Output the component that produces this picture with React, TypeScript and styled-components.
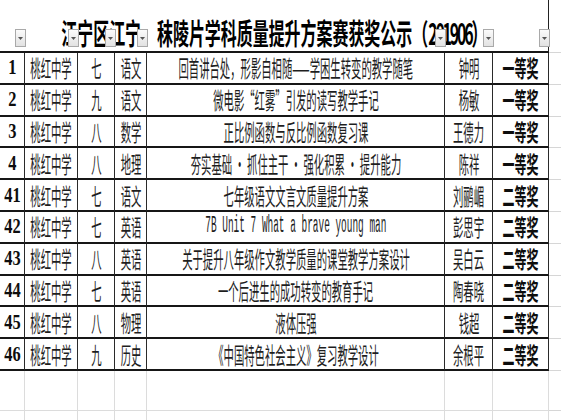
import React from "react";
import styled, { createGlobalStyle } from "styled-components";

const GlobalStyle = createGlobalStyle`
  html, body { margin: 0; padding: 0; background: #ffffff; overflow: hidden; }
  body { font-family: "Noto Sans CJK SC", "Noto Sans", sans-serif; }
`;

const COLS = "25px 53px 37px 32px 298px 48px 56px";

const Sheet = styled.div`
  display: grid;
  grid-template-columns: ${COLS} 12px;
  width: 561px;
  height: 420px;
  overflow: hidden;
  background: #ffffff;
`;

const TitleCell = styled.div`
  grid-column: 1 / span 7;
  position: relative;
  box-sizing: border-box;
  height: 53px;
  padding-top: 14px;
  border-bottom: 2px solid #161616;
  border-right: 1px solid #222;
  display: flex;
  align-items: center;
  justify-content: center;
`;

const Title = styled.span`
  display: inline-block;
  white-space: nowrap;
  font-family: "Noto Sans CJK SC", sans-serif;
  font-weight: 700;
  font-size: 29px;
  line-height: 1;
  color: #000;
  transform: scaleX(0.55);
  transform-origin: center;
`;

const Year = styled.span`
  letter-spacing: -4px;
`;

const FilterBar = styled.div`
  position: absolute;
  inset: 0;
  display: grid;
  grid-template-columns: ${COLS};
  pointer-events: none;
`;

const FilterSlot = styled.div`
  display: flex;
  justify-content: flex-end;
  align-items: flex-start;
  padding-top: 29px;
`;

const FilterButton = styled.div`
  box-sizing: border-box;
  width: 11px;
  height: 18px;
  margin-right: -1px;
  border: 1px solid #a9a9a9;
  background: linear-gradient(#fbfbfb, #e2e2e2);
  display: flex;
  align-items: center;
  justify-content: center;
`;

const Filler = styled.div<{ $h: string }>`
  box-sizing: border-box;
  height: ${(p) => p.$h};
  border-bottom: 1px solid #d6d6d6;
`;

const Cell = styled.div`
  box-sizing: border-box;
  height: 31.8px;
  border-bottom: 2px solid #161616;
  border-right: 1px solid #2a2a2a;
  display: flex;
  align-items: center;
  justify-content: center;
`;

const Blank = styled.div<{ $h: string }>`
  box-sizing: border-box;
  height: ${(p) => p.$h};
  border-right: 1px solid #dcdcdc;
  border-bottom: 1px solid #dcdcdc;
`;

type Kind = "num" | "body" | "award" | "latin";

const SIZE: Record<Kind, string> = { num: "21px", body: "23px", award: "23px", latin: "23px" };
const SCALE: Record<Kind, number> = { num: 0.78, body: 0.45, award: 0.52, latin: 0.41 };

const Squeeze = styled.span<{ $kind: Kind }>`
  display: inline-block;
  white-space: nowrap;
  line-height: 1;
  transform-origin: center;
  color: ${(p) => (p.$kind === "num" || p.$kind === "award" ? "#0d0d0d" : "#1e1e1e")};
  font-family: ${(p) =>
    p.$kind === "num"
      ? '"Liberation Serif", serif'
      : p.$kind === "latin"
      ? '"Liberation Mono", monospace'
      : '"Noto Sans CJK SC", sans-serif'};
  font-weight: ${(p) => (p.$kind === "num" || p.$kind === "award" ? 700 : 400)};
  font-size: ${(p) => SIZE[p.$kind]};
  transform: scaleX(${(p) => SCALE[p.$kind]});
`;

const Arrow = () => (
  <svg width="5" height="3" viewBox="0 0 5 3">
    <path d="M0 0 H5 L2.5 3 Z" fill="#555" />
  </svg>
);

type Row = {
  no: string;
  school: string;
  grade: string;
  subject: string;
  title: string;
  latin?: boolean;
  name: string;
  award: string;
};

const rows: Row[] = [
  { no: "1", school: "桃红中学", grade: "七", subject: "语文", title: "回首讲台处，形影自相随——学困生转变的教学随笔", name: "钟明", award: "一等奖" },
  { no: "2", school: "桃红中学", grade: "九", subject: "语文", title: "微电影“红雾”引发的读写教学手记", name: "杨敏", award: "一等奖" },
  { no: "3", school: "桃红中学", grade: "八", subject: "数学", title: "正比例函数与反比例函数复习课", name: "王德力", award: "一等奖" },
  { no: "4", school: "桃红中学", grade: "八", subject: "地理", title: "夯实基础 • 抓住主干 • 强化积累 • 提升能力", name: "陈祥", award: "一等奖" },
  { no: "41", school: "桃红中学", grade: "七", subject: "语文", title: "七年级语文文言文质量提升方案", name: "刘鹂嵋", award: "二等奖" },
  { no: "42", school: "桃红中学", grade: "七", subject: "英语", title: "7B Unit 7 What a brave young man", latin: true, name: "彭思宇", award: "二等奖" },
  { no: "43", school: "桃红中学", grade: "八", subject: "英语", title: "关于提升八年级作文教学质量的课堂教学方案设计", name: "吴白云", award: "二等奖" },
  { no: "44", school: "桃红中学", grade: "七", subject: "英语", title: "一个后进生的成功转变的教育手记", name: "陶春晓", award: "二等奖" },
  { no: "45", school: "桃红中学", grade: "八", subject: "物理", title: "液体压强", name: "钱超", award: "二等奖" },
  { no: "46", school: "桃红中学", grade: "九", subject: "历史", title: "《中国特色社会主义》复习教学设计", name: "余根平", award: "二等奖" },
];

export default function App() {
  return (
    <>
      <GlobalStyle />
      <Sheet>
        <TitleCell>
          <Title>
            江宁区江宁、秣陵片学科质量提升方案赛获奖公示（<Year>201906</Year>）
          </Title>
          <FilterBar>
            {Array.from({ length: 7 }).map((_, i) => (
              <FilterSlot key={i}>
                <FilterButton>
                  <Arrow />
                </FilterButton>
              </FilterSlot>
            ))}
          </FilterBar>
        </TitleCell>
        <Filler $h="53px" />
        {rows.map((r) => (
          <React.Fragment key={r.no}>
            <Cell>
              <Squeeze $kind="num">{r.no}</Squeeze>
            </Cell>
            <Cell>
              <Squeeze $kind="body">{r.school}</Squeeze>
            </Cell>
            <Cell>
              <Squeeze $kind="body">{r.grade}</Squeeze>
            </Cell>
            <Cell>
              <Squeeze $kind="body">{r.subject}</Squeeze>
            </Cell>
            <Cell>
              <Squeeze $kind={r.latin ? "latin" : "body"}>{r.title}</Squeeze>
            </Cell>
            <Cell>
              <Squeeze $kind="body">{r.name}</Squeeze>
            </Cell>
            <Cell>
              <Squeeze $kind="award">{r.award}</Squeeze>
            </Cell>
            <Filler $h="31.8px" />
          </React.Fragment>
        ))}
        {["40px", "40px"].map((h, ri) => (
          <React.Fragment key={ri}>
            {Array.from({ length: 7 }).map((_, i) => (
              <Blank key={i} $h={h} />
            ))}
            <Filler $h={h} />
          </React.Fragment>
        ))}
      </Sheet>
    </>
  );
}
